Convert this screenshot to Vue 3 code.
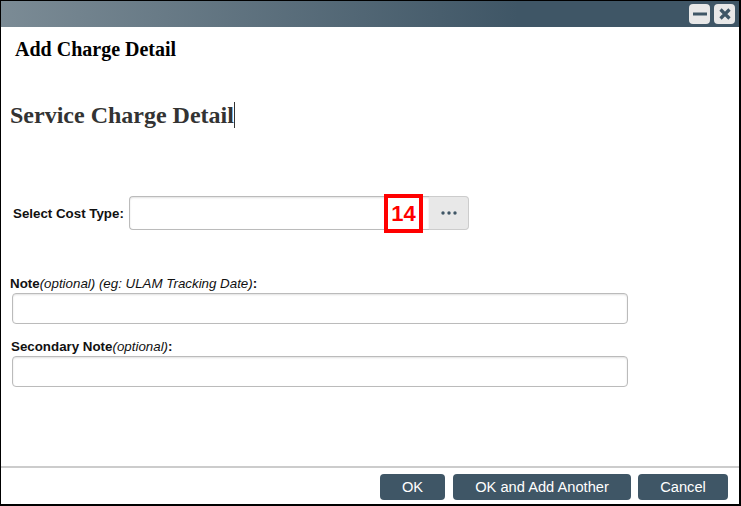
<script setup>
const buttons = [
  { label: 'OK', width: 65 },
  { label: 'OK and Add Another', width: 178 },
  { label: 'Cancel', width: 90 },
]
</script>

<template>
  <div class="window">
    <div class="titlebar">
      <button class="win-btn" aria-label="Minimize">
        <svg width="16" height="14" viewBox="0 0 16 14"><path d="M1 7h14" stroke="#3f5666" stroke-width="3" /></svg>
      </button>
      <button class="win-btn" aria-label="Close">
        <svg width="14" height="14" viewBox="0 0 14 14"><path d="M2.5 2.5l9 9M11.5 2.5l-9 9" stroke="#3f5666" stroke-width="3.2" /></svg>
      </button>
    </div>

    <div class="body">
      <h1 class="dialog-title">Add Charge Detail</h1>
      <h2 class="section-title"><span class="caret-text">Service Charge Detail</span></h2>

      <div class="cost-row">
        <label class="cost-label" for="cost">Select Cost Type:</label>
        <div class="cost-field">
          <input id="cost" class="cost-input" type="text" />
          <button class="more-btn" aria-label="Browse">
            <svg width="16" height="4" viewBox="0 0 16 4">
              <circle cx="2" cy="2" r="1.7" fill="#3f5666" />
              <circle cx="8" cy="2" r="1.7" fill="#3f5666" />
              <circle cx="14" cy="2" r="1.7" fill="#3f5666" />
            </svg>
          </button>
          <span class="callout">14</span>
        </div>
      </div>

      <div class="note note-first">
        <label class="note-label" for="note"><b>Note</b><i>(optional) (eg: ULAM Tracking Date)</i><b>:</b></label>
        <input id="note" class="text-input" type="text" />
      </div>

      <div class="note note-second">
        <label class="note-label" for="note2"><b>Secondary Note</b><i>(optional)</i><b>:</b></label>
        <input id="note2" class="text-input" type="text" />
      </div>
    </div>

    <div class="footer">
      <button
        v-for="b in buttons"
        :key="b.label"
        class="action-btn"
        :style="{ width: b.width + 'px' }"
      >
        {{ b.label }}
      </button>
    </div>
  </div>
</template>

<style scoped>
.window {
  width: 741px;
  height: 506px;
  box-sizing: border-box;
  border: 1px solid #000;
  border-width: 1px 2px 2px 1px;
  display: flex;
  flex-direction: column;
  background: #fff;
  font-family: "Liberation Sans", Arial, sans-serif;
}
.titlebar {
  height: 26px;
  flex: none;
  display: flex;
  justify-content: flex-end;
  align-items: center;
  gap: 4px;
  padding-right: 4px;
  background: linear-gradient(to right, #7b8b95, #3f5666 70%, #3f5666);
}
.win-btn {
  width: 21px;
  height: 20px;
  padding: 0;
  border: none;
  border-radius: 4px;
  background: #e8e8e8;
  display: flex;
  align-items: center;
  justify-content: center;
}
.body {
  flex: 1;
  min-height: 0;
  padding: 0 0 0 9px;
}
.dialog-title {
  margin: 12px 0 0 5px;
  font: bold 20px/20px "Liberation Serif", "Times New Roman", serif;
  color: #000;
}
.section-title {
  margin: 42px 0 0 0;
  font: bold 24px/28px "Liberation Serif", "Times New Roman", serif;
  color: #333;
}
.caret-text {
  border-right: 1px solid #333;
}
.cost-row {
  display: flex;
  align-items: center;
  margin-top: 67px;
  margin-left: 3px;
}
.cost-label {
  width: 116px;
  flex: none;
  font-size: 13.33px;
  font-weight: bold;
  color: #111;
}
.cost-field {
  position: relative;
  display: flex;
  width: 340px;
  height: 34px;
}
.cost-input {
  flex: 1;
  min-width: 0;
  box-sizing: border-box;
  border: 1px solid #bbb;
  border-right: none;
  border-radius: 4px 0 0 4px;
  box-shadow: inset 0 1px 2px rgba(0, 0, 0, 0.12);
  outline: none;
}
.more-btn {
  width: 40px;
  flex: none;
  padding: 0;
  border: 1px solid #ccc;
  border-left: none;
  border-radius: 0 4px 4px 0;
  background: #e8e8e8;
  display: flex;
  align-items: center;
  justify-content: center;
}
.callout {
  position: absolute;
  left: 255px;
  top: -2px;
  width: 39px;
  height: 39px;
  box-sizing: border-box;
  border: 4px solid #f00;
  background: #fff;
  color: #f00;
  font-size: 22px;
  font-weight: bold;
  line-height: 32px;
  text-align: center;
}
.note-first {
  margin-top: 45px;
}
.note-second {
  margin-top: 14px;
}
.note-label {
  display: block;
  height: 17px;
  margin-bottom: 1px;
  font-size: 13.33px;
  line-height: 17px;
  color: #111;
}
.note-second .note-label {
  padding-left: 1px;
}
.text-input {
  display: block;
  width: 616px;
  height: 31px;
  margin-left: 2px;
  box-sizing: border-box;
  border: 1px solid #bbb;
  border-radius: 4px;
  box-shadow: inset 0 1px 2px rgba(0, 0, 0, 0.12);
  outline: none;
}
.footer {
  flex: none;
  height: 38px;
  box-sizing: border-box;
  border-top: 2px solid #ccc;
  display: flex;
  justify-content: flex-end;
  align-items: flex-start;
  gap: 8px;
  padding: 6px 11px 0 0;
}
.action-btn {
  height: 26px;
  padding: 0;
  border: none;
  border-radius: 4px;
  background: #3f5666;
  color: #fff;
  font-family: "Liberation Sans", Arial, sans-serif;
  font-size: 14.67px;
}
.action-btn:last-child {
  margin-left: -1px;
}
</style>
